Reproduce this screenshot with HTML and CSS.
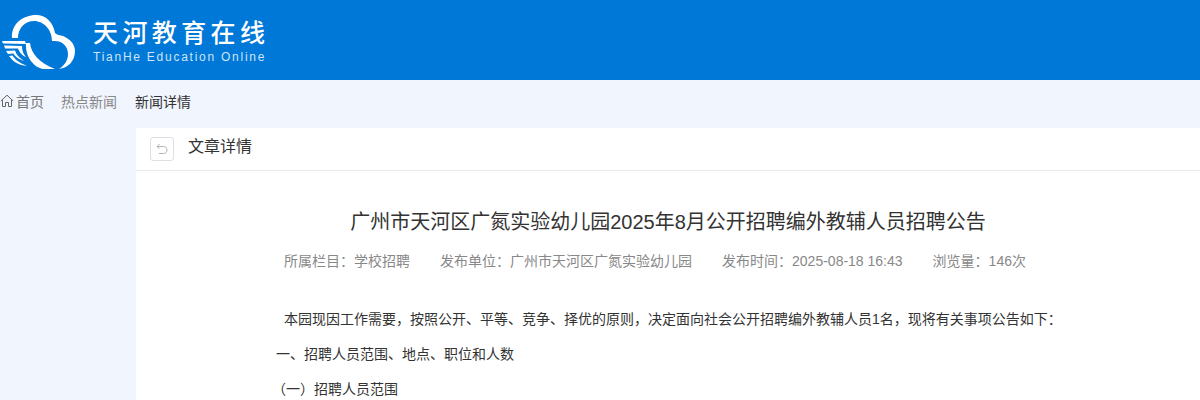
FILE: index.html
```html
<!DOCTYPE html>
<html lang="zh-CN">
<head>
<meta charset="utf-8">
<title>文章详情</title>
<link rel="stylesheet" href="styles.css">
</head>
<body>
<header class="topbar">
  <div class="logo">
    <svg class="logo-mark" width="76" height="80" viewBox="0 0 76 80">
      <path fill="#fff" d="M12 38C11 24 23 15 36 15C46 15 53 22 55 33C57 35 60 35 63 36C70 39 75 44 75 51C75 61 68 68 59 69C65 65 68 60 68 54C68 47 63 41 55 41H52C52 30 44 21 34 21C25 21 18 28 18 38Z"/>
      <path fill="#fff" d="M30 43C31 53 39 63 55 69H43C33 67 25 56 26 43Z"/>
      <path fill="#fff" d="M2 41H25L26 44L3 43.5Z"/>
      <path fill="#fff" d="M4 45.5L22 46C22 50 23 54 26 57C21 55 19 51 18 48.5L5 48.5Z"/>
      <path fill="#fff" d="M6 51L15 50.5C16 54 19 58 24 61C18 59 15 56 13.5 53.5L8 54Z"/>
      <path fill="#fff" d="M9 56L12.5 55.5C15 60 20 63 27 66C19 65 14 62 11.5 59Z"/>
    </svg>
    <div class="logo-text">
      <div class="logo-cn">天河教育在线</div>
      <div class="logo-en">TianHe Education Online</div>
    </div>
  </div>
</header>
<nav class="crumbs">
  <svg class="home-icon" width="14" height="14" viewBox="0 0 14 14"><path fill="none" stroke="#666" stroke-width="1" d="M0.8 7L7 1.2L13.2 7M2.5 6V12.5H5.5V8.5H8.5V12.5H11.5V6"/></svg>
  <span class="crumb first">首页</span>
  <span class="crumb">热点新闻</span>
  <span class="crumb current">新闻详情</span>
</nav>
<div class="layout">
  <aside class="side"></aside>
  <main class="main">
    <div class="main-head">
      <button class="back" aria-label="返回">
        <svg width="12" height="12" viewBox="0 0 12 12"><path fill="none" stroke="#b0b3b8" stroke-width="1" d="M3.5 1L1 3.5L3.5 5.5M1 3.5H7.5C9.5 3.5 11 5 11 7C11 9 9.5 10.5 7.5 10.5H3"/></svg>
      </button>
      <span class="head-title">文章详情</span>
    </div>
    <article class="article">
      <h1 class="title">广州市天河区广氮实验幼儿园2025年8月公开招聘编外教辅人员招聘公告</h1>
      <div class="meta">
        <span>所属栏目：学校招聘</span>
        <span>发布单位：广州市天河区广氮实验幼儿园</span>
        <span>发布时间：2025-08-18 16:43</span>
        <span>浏览量：146次</span>
      </div>
      <div class="content">
        <p class="indent">本园现因工作需要，按照公开、平等、竞争、择优的原则，决定面向社会公开招聘编外教辅人员1名，现将有关事项公告如下：</p>
        <p>一、招聘人员范围、地点、职位和人数</p>
        <p class="outdent">（一）招聘人员范围</p>
      </div>
    </article>
  </main>
</div>
</body>
</html>
```
FILE: styles.css
```css
* { box-sizing: border-box; }
html, body { margin: 0; height: 400px; overflow: hidden; }
body {
  font-family: "Liberation Sans", "Noto Sans CJK SC", sans-serif;
  font-size: 14px;
  background: #f0f5fe;
  color: #333;
}
.topbar {
  height: 80px;
  background: #0078d7;
  display: flex;
  align-items: center;
}
.logo { display: flex; align-items: center; }
.logo-mark { display: block; }
.logo-text { margin-left: 17px; color: #fff; }
.logo-cn {
  font-family: "Noto Sans CJK SC", sans-serif;
  font-size: 25px;
  font-weight: 500;
  line-height: 30px;
  letter-spacing: 4.4px;
  white-space: nowrap;
}
.logo-en {
  font-size: 12px;
  line-height: 16px;
  letter-spacing: 1.75px;
  margin-top: 3px;
  color: #cfe4f7;
  white-space: nowrap;
}
.crumbs {
  height: 42px;
  display: flex;
  align-items: center;
  margin-bottom: 6px;
  color: #888;
}
.home-icon { display: block; flex: none; margin-top: -1px; }
.crumb { margin-right: 18px; }
.crumb.first { margin-left: 2px; margin-right: 17px; color: #777; }
.crumb.current { color: #333; }
.layout { display: flex; height: 272px; }
.side { width: 136px; flex: none; }
.main { flex: 1; background: #fff; min-width: 0; }
.main-head {
  height: 43px;
  display: flex;
  align-items: center;
  padding-left: 14px;
  border-bottom: 1px solid #e8eaed;
}
.back {
  width: 24px;
  height: 24px;
  padding: 0;
  background: #fff;
  border: 1px solid #dcdfe6;
  border-radius: 3px;
  display: flex;
  align-items: center;
  justify-content: center;
}
.head-title { margin: 0 0 8px 14px; font-size: 16px; color: #333; }
.article { padding-top: 36px; }
.title {
  margin: 0;
  text-align: center;
  font-size: 20px;
  font-weight: 400;
  line-height: 30px;
  color: #333;
}
.meta {
  display: flex;
  justify-content: center;
  gap: 30px;
  margin-top: 14px;
  padding-right: 26px;
  line-height: 20px;
  color: #888;
}
.content { padding: 31px 140px 0; color: #333; }
.content p { margin: 0; line-height: 35px; white-space: nowrap; }
.content .indent { text-indent: 8px; }
.content .outdent { text-indent: -4px; }
```
